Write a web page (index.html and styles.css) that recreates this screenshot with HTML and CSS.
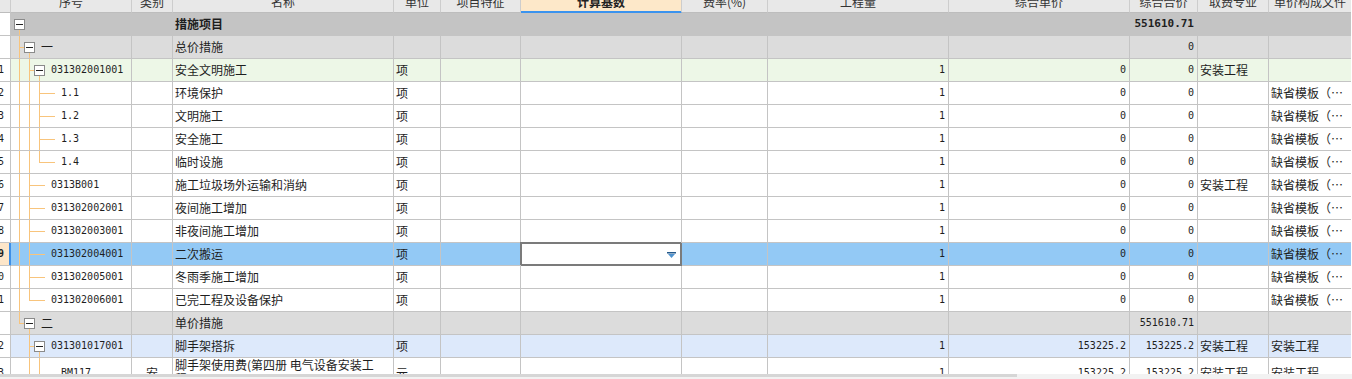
FILE: index.html
```html
<!DOCTYPE html>
<html lang="zh-CN">
<head>
<meta charset="utf-8">
<title>措施项目</title>
<link rel="stylesheet" href="styles.css">
</head>
<body>
<div class="view">
  <div class="grid">
    <div class="row head">
      <div class="c idx"></div>
      <div class="c">序号</div>
      <div class="c">类别</div>
      <div class="c">名称</div>
      <div class="c">单位</div>
      <div class="c">项目特征</div>
      <div class="c act">计算基数</div>
      <div class="c">费率(%)</div>
      <div class="c">工程量</div>
      <div class="c">综合单价</div>
      <div class="c">综合合价</div>
      <div class="c">取费专业</div>
      <div class="c">单价构成文件</div>
    </div>

    <div class="row root">
      <div class="c idx m"></div>
      <div class="c seq"><i class="box"></i></div>
      <div class="c ctr"></div>
      <div class="c b">措施项目</div>
      <div class="c"></div><div class="c"></div><div class="c"></div><div class="c"></div>
      <div class="c r"></div><div class="c r"></div>
      <div class="c r m bn">551610.71</div>
      <div class="c"></div><div class="c"></div>
    </div>

    <div class="row grp">
      <div class="c idx m"></div>
      <div class="c seq"><i class="u t"></i><i class="box"></i><span class="lbl">一</span></div>
      <div class="c ctr"></div>
      <div class="c">总价措施</div>
      <div class="c"></div><div class="c"></div><div class="c"></div><div class="c"></div>
      <div class="c r"></div><div class="c r"></div>
      <div class="c r m">0</div>
      <div class="c"></div><div class="c"></div>
    </div>

    <div class="row green">
      <div class="c idx m">1</div>
      <div class="c seq"><i class="u v"></i><i class="u t"></i><i class="box"></i><span class="lbl m">031302001001</span></div>
      <div class="c ctr"></div>
      <div class="c">安全文明施工</div>
      <div class="c">项</div><div class="c"></div><div class="c"></div><div class="c"></div>
      <div class="c r m">1</div><div class="c r m">0</div><div class="c r m">0</div>
      <div class="c">安装工程</div><div class="c"></div>
    </div>

    <div class="row">
      <div class="c idx m">2</div>
      <div class="c seq"><i class="u v"></i><i class="u v"></i><i class="u t"></i><i class="stub"></i><span class="lbl m">1.1</span></div>
      <div class="c ctr"></div>
      <div class="c">环境保护</div>
      <div class="c">项</div><div class="c"></div><div class="c"></div><div class="c"></div>
      <div class="c r m">1</div><div class="c r m">0</div><div class="c r m">0</div>
      <div class="c"></div><div class="c">缺省模板（…</div>
    </div>

    <div class="row">
      <div class="c idx m">3</div>
      <div class="c seq"><i class="u v"></i><i class="u v"></i><i class="u t"></i><i class="stub"></i><span class="lbl m">1.2</span></div>
      <div class="c ctr"></div>
      <div class="c">文明施工</div>
      <div class="c">项</div><div class="c"></div><div class="c"></div><div class="c"></div>
      <div class="c r m">1</div><div class="c r m">0</div><div class="c r m">0</div>
      <div class="c"></div><div class="c">缺省模板（…</div>
    </div>

    <div class="row">
      <div class="c idx m">4</div>
      <div class="c seq"><i class="u v"></i><i class="u v"></i><i class="u t"></i><i class="stub"></i><span class="lbl m">1.3</span></div>
      <div class="c ctr"></div>
      <div class="c">安全施工</div>
      <div class="c">项</div><div class="c"></div><div class="c"></div><div class="c"></div>
      <div class="c r m">1</div><div class="c r m">0</div><div class="c r m">0</div>
      <div class="c"></div><div class="c">缺省模板（…</div>
    </div>

    <div class="row">
      <div class="c idx m">5</div>
      <div class="c seq"><i class="u v"></i><i class="u v"></i><i class="u l"></i><i class="stub"></i><span class="lbl m">1.4</span></div>
      <div class="c ctr"></div>
      <div class="c">临时设施</div>
      <div class="c">项</div><div class="c"></div><div class="c"></div><div class="c"></div>
      <div class="c r m">1</div><div class="c r m">0</div><div class="c r m">0</div>
      <div class="c"></div><div class="c">缺省模板（…</div>
    </div>

    <div class="row">
      <div class="c idx m">6</div>
      <div class="c seq"><i class="u v"></i><i class="u t"></i><i class="stub"></i><span class="lbl m">0313B001</span></div>
      <div class="c ctr"></div>
      <div class="c">施工垃圾场外运输和消纳</div>
      <div class="c">项</div><div class="c"></div><div class="c"></div><div class="c"></div>
      <div class="c r m">1</div><div class="c r m">0</div><div class="c r m">0</div>
      <div class="c">安装工程</div><div class="c">缺省模板（…</div>
    </div>

    <div class="row">
      <div class="c idx m">7</div>
      <div class="c seq"><i class="u v"></i><i class="u t"></i><i class="stub"></i><span class="lbl m">031302002001</span></div>
      <div class="c ctr"></div>
      <div class="c">夜间施工增加</div>
      <div class="c">项</div><div class="c"></div><div class="c"></div><div class="c"></div>
      <div class="c r m">1</div><div class="c r m">0</div><div class="c r m">0</div>
      <div class="c"></div><div class="c">缺省模板（…</div>
    </div>

    <div class="row">
      <div class="c idx m">8</div>
      <div class="c seq"><i class="u v"></i><i class="u t"></i><i class="stub"></i><span class="lbl m">031302003001</span></div>
      <div class="c ctr"></div>
      <div class="c">非夜间施工增加</div>
      <div class="c">项</div><div class="c"></div><div class="c"></div><div class="c"></div>
      <div class="c r m">1</div><div class="c r m">0</div><div class="c r m">0</div>
      <div class="c"></div><div class="c">缺省模板（…</div>
    </div>

    <div class="row sel">
      <div class="c idx m">9</div>
      <div class="c seq"><i class="u v"></i><i class="u t"></i><i class="stub"></i><span class="lbl m">031302004001</span></div>
      <div class="c ctr"></div>
      <div class="c">二次搬运</div>
      <div class="c">项</div><div class="c"></div>
      <div class="c editor"><svg class="dd" width="9" height="6" viewBox="0 0 9 6"><rect width="9" height="1.5" fill="#24598a"/><path d="M1 2h7L4.5 6z" fill="#4f93cf"/></svg></div>
      <div class="c"></div>
      <div class="c r m">1</div><div class="c r m">0</div><div class="c r m">0</div>
      <div class="c"></div><div class="c">缺省模板（…</div>
    </div>

    <div class="row">
      <div class="c idx m">10</div>
      <div class="c seq"><i class="u v"></i><i class="u t"></i><i class="stub"></i><span class="lbl m">031302005001</span></div>
      <div class="c ctr"></div>
      <div class="c">冬雨季施工增加</div>
      <div class="c">项</div><div class="c"></div><div class="c"></div><div class="c"></div>
      <div class="c r m">1</div><div class="c r m">0</div><div class="c r m">0</div>
      <div class="c"></div><div class="c">缺省模板（…</div>
    </div>

    <div class="row">
      <div class="c idx m">11</div>
      <div class="c seq"><i class="u v"></i><i class="u l"></i><i class="stub"></i><span class="lbl m">031302006001</span></div>
      <div class="c ctr"></div>
      <div class="c">已完工程及设备保护</div>
      <div class="c">项</div><div class="c"></div><div class="c"></div><div class="c"></div>
      <div class="c r m">1</div><div class="c r m">0</div><div class="c r m">0</div>
      <div class="c"></div><div class="c">缺省模板（…</div>
    </div>

    <div class="row grp">
      <div class="c idx m"></div>
      <div class="c seq"><i class="u l"></i><i class="box"></i><span class="lbl">二</span></div>
      <div class="c ctr"></div>
      <div class="c">单价措施</div>
      <div class="c"></div><div class="c"></div><div class="c"></div><div class="c"></div>
      <div class="c r"></div><div class="c r"></div>
      <div class="c r m">551610.71</div>
      <div class="c"></div><div class="c"></div>
    </div>

    <div class="row lblue">
      <div class="c idx m">12</div>
      <div class="c seq"><i class="u"></i><i class="u t"></i><i class="box"></i><span class="lbl m">031301017001</span></div>
      <div class="c ctr"></div>
      <div class="c">脚手架搭拆</div>
      <div class="c">项</div><div class="c"></div><div class="c"></div><div class="c"></div>
      <div class="c r m">1</div><div class="c r m">153225.2</div><div class="c r m">153225.2</div>
      <div class="c">安装工程</div><div class="c">安装工程</div>
    </div>

    <div class="row tall">
      <div class="c idx m">13</div>
      <div class="c seq"><i class="u"></i><i class="u v"></i><i class="u t"></i><i class="stub"></i><span class="lbl m">BM117</span></div>
      <div class="c ctr">安</div>
      <div class="c wrap">脚手架使用费(第四册 电气设备安装工程)</div>
      <div class="c">元</div><div class="c"></div><div class="c"></div><div class="c"></div>
      <div class="c r m">1</div><div class="c r m">153225.2</div><div class="c r m">153225.2</div>
      <div class="c">安装工程</div><div class="c">安装工程</div>
    </div>
  </div>
</div>
<div class="hscroll"><div class="thumb"></div></div>
</body>
</html>
```

FILE: styles.css
```css
html, body {
  margin: 0;
  background: #fff;
}
body {
  font-family: "Noto Sans CJK SC", sans-serif;
  font-size: 12px;
  color: #1e1e1e;
  overflow: hidden;
}
.view {
  height: 374px;
  overflow: hidden;
}
.grid {
  margin: -8px 0 0 -25px;
  width: 1376px;
}
.row {
  display: grid;
  grid-template-columns: 36px 121px 41px 221px 47px 80px 161px 86px 181px 181px 68px 71px 82px;
  height: 23px;
}
.c {
  box-sizing: border-box;
  border-right: 1px solid #c4c4c4;
  border-bottom: 1px solid #c4c4c4;
  display: flex;
  align-items: center;
  padding: 0 2px 2px;
  overflow: hidden;
  white-space: nowrap;
  min-width: 0;
}
.c:last-child {
  border-right: none;
}

/* header */
.head {
  height: 21px;
  background: #e8e8e8;
}
.head .c {
  justify-content: center;
  color: #333;
  border-right-color: #cdcdcd;
  border-bottom-color: #bdbdbd;
}
.head .act {
  background: #fde8c9;
  font-weight: bold;
  color: #222;
  border-bottom-color: #3b93ee;
  box-shadow: inset 0 -1px 0 #3b93ee;
}
.head .idx {
  background: #e8e8e8;
}

/* row kinds */
.root { background: #c4c4c4; }
.grp { background: #dcdcdc; }
.green { background: #edf7e7; }
.sel { background: #93c9f5; }
.lblue { background: #dde9fb; }
.tall { height: 32px; }

.idx {
  background: #fff;
  justify-content: flex-end;
  padding-right: 6px;
}
.sel .idx {
  background: #fde6c9;
  border-right-color: #3d8fe8;
  box-shadow: inset -1px 0 0 #3d8fe8;
  font-weight: bold;
}

.r {
  justify-content: flex-end;
  padding-right: 3px;
}
.ctr {
  justify-content: center;
}
.b {
  font-weight: bold;
}
.m {
  font-family: "DejaVu Sans Mono", monospace;
  font-size: 10px;
}
.bn {
  font-weight: bold;
  font-size: 11px;
}
.wrap {
  white-space: normal;
  align-items: flex-start;
  line-height: 14px;
  padding-top: 0;
  padding-right: 12px;
}

/* editor cell */
.editor {
  background: #fff;
  justify-content: flex-end;
  padding: 0 5px 0 0;
  border-right-color: #7b7b7b;
  border-bottom-color: #7b7b7b;
  box-shadow: inset 1px 1px 0 #7b7b7b, inset -1px -1px 0 #7b7b7b, -1px -1px 0 #7b7b7b;
  overflow: visible;
}
.dd {
  display: block;
  margin-top: 1px;
}

/* tree */
.seq {
  padding: 0 0 0 3px;
  align-items: stretch;
}
.u {
  width: 10px;
  flex: none;
  position: relative;
}
.u.v::before,
.u.t::before,
.u.l::before {
  content: "";
  position: absolute;
  left: 5px;
  top: 0;
  width: 1px;
  height: 100%;
  background: #f8c47c;
}
.u.l::before {
  height: 50%;
}
.u.t::after,
.u.l::after {
  content: "";
  position: absolute;
  left: 5px;
  right: 0;
  top: 50%;
  height: 1px;
  background: #f8c47c;
}
.box {
  width: 11px;
  height: 11px;
  box-sizing: border-box;
  border: 1px solid #8a8a8a;
  background: #fff;
  flex: none;
  align-self: center;
  position: relative;
}
.box::before {
  content: "";
  position: absolute;
  left: 1px;
  right: 1px;
  top: 4px;
  height: 1px;
  background: #222;
}
.box::after {
  content: "";
  position: absolute;
  left: 4px;
  top: calc(100% + 1px);
  width: 1px;
  height: 12px;
  background: #f8c47c;
}
.stub {
  width: 11px;
  flex: none;
  position: relative;
}
.stub::before {
  content: "";
  position: absolute;
  left: 0;
  right: 0;
  top: 50%;
  height: 1px;
  background: #f8c47c;
}
.lbl {
  margin: 0 0 2px 6px;
  align-self: center;
}

/* horizontal scrollbar */
.hscroll {
  height: 5px;
  background: #f2f2f2;
}
.thumb {
  width: 1017px;
  height: 3px;
  background: #d6d6d6;
}
```
